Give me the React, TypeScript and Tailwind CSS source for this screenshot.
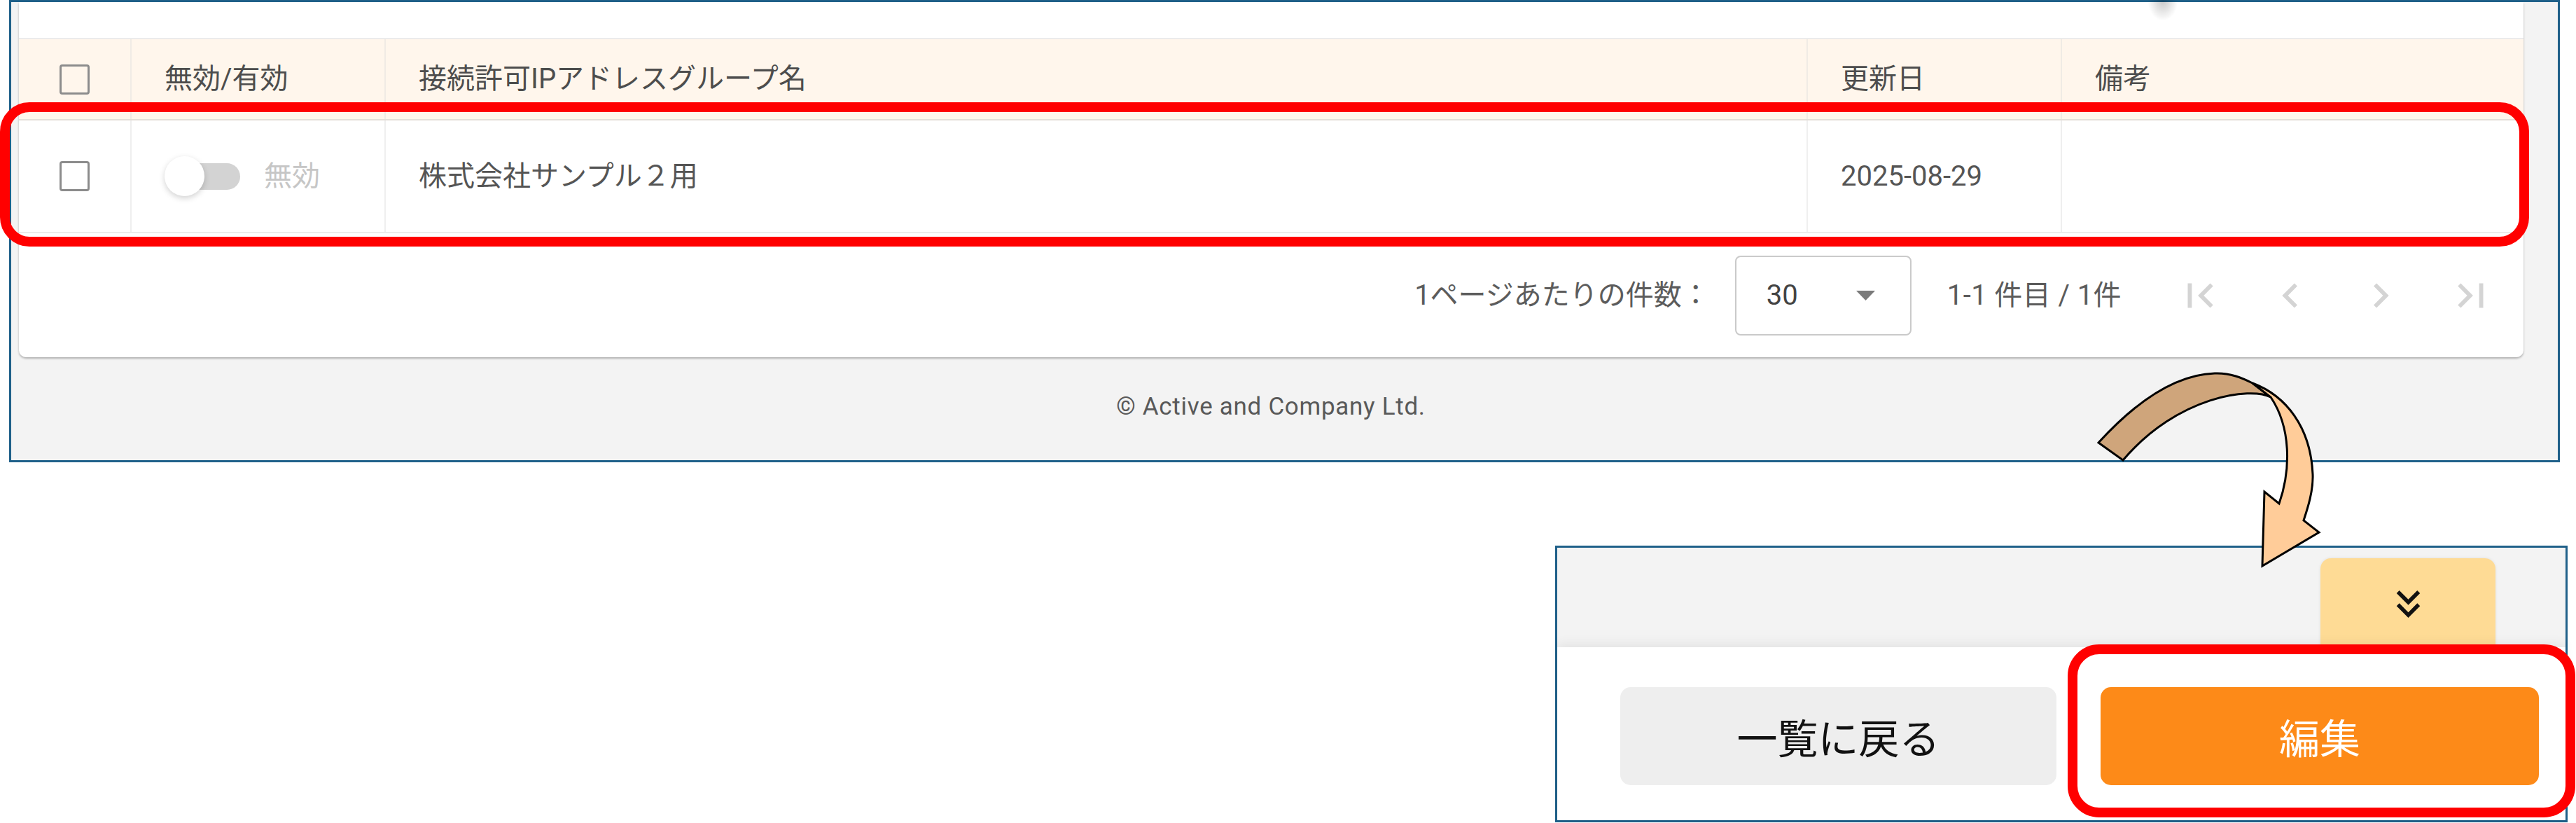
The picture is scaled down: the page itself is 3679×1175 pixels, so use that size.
import React from 'react';

const COLS = 'grid grid-cols-[161px_363px_2031px_363px_1fr]';

const FIRST_PAGE = 'M18.41 16.59 13.82 12l4.59-4.59L17 6l-6 6 6 6zM6 6h2v12H6z';
const PREV_PAGE = 'M15.41 7.41 14 6l-6 6 6 6 1.41-1.41L10.83 12z';
const NEXT_PAGE = 'M10 6 8.59 7.41 13.17 12l-4.58 4.59L10 18l6-6z';
const LAST_PAGE = 'M5.59 7.41 10.18 12l-4.59 4.59L7 18l6-6-6-6zM16 6h2v12h-2z';

function Checkbox() {
  return <div className="h-[43px] w-[43px] rounded-[4px] border-[3px] border-[#8c8c8c]" />;
}

function PageIcon({ d }: Readonly<{ d: string }>) {
  return (
    <svg viewBox="0 0 24 24" className="h-[70px] w-[70px]" fill="#d4d4d4">
      <path d={d} />
    </svg>
  );
}

function Toggle() {
  return (
    <div className="relative h-[57px] w-[108px]">
      <div className="absolute left-[10px] top-[10px] h-[38px] w-[98px] rounded-full bg-[#d3d3d3]" />
      <div className="absolute left-0 top-0 h-[57px] w-[57px] rounded-full bg-white shadow-[0_3px_8px_rgba(0,0,0,0.18)]" />
    </div>
  );
}

function ListCard() {
  return (
    <div className="ml-[11px] w-[3577px] rounded-b-[10px] bg-white shadow-[0_2px_3px_rgba(0,0,0,0.28)]">
      {/* toolbar area, mostly cut off in the capture */}
      <div className="relative h-[51px]">
        <div className="absolute left-[3040px] top-[-3px] h-[30px] w-[44px] bg-[radial-gradient(ellipse_at_top,rgba(0,0,0,0.22),transparent_70%)]" />
      </div>

      <div className={`${COLS} h-[118px] border-y-2 border-t-[#ebebeb] border-b-[#e4ded8] bg-[#fff6ec] text-[40px] text-[#4d4d4d]`}>
        <div className="flex items-center justify-center border-r-2 border-[#f0ebe5]">
          <Checkbox />
        </div>
        <div className="flex items-center border-r-2 border-[#f0ebe5] px-[47px]">無効/有効</div>
        <div className="flex items-center border-r-2 border-[#f0ebe5] px-[47px]">接続許可IPアドレスグループ名</div>
        <div className="flex items-center border-r-2 border-[#f0ebe5] px-[47px]">更新日</div>
        <div className="flex items-center px-[47px]">備考</div>
      </div>

      <div className={`${COLS} h-[161px] border-b-2 border-[#ebebeb] text-[40px] text-[#555555]`}>
        <div className="flex items-center justify-center border-r-2 border-[#efefef]">
          <Checkbox />
        </div>
        <div className="flex items-center border-r-2 border-[#efefef] pl-[47px]">
          <Toggle />
          <span className="ml-[34px] text-[#c6c6c6]">無効</span>
        </div>
        <div className="flex items-center border-r-2 border-[#efefef] px-[47px]">株式会社サンプル２用</div>
        <div className="flex items-center border-r-2 border-[#efefef] px-[47px]">2025-08-29</div>
        <div className="flex items-center px-[47px]" />
      </div>

      <div className="flex h-[177px] items-center justify-end pr-[40px] text-[40px] text-[#5c5c5c]">
        <span>1ページあたりの件数：</span>
        <div className="ml-[36px] flex h-[114px] w-[252px] items-center justify-between rounded-[8px] border-2 border-[#cacaca] pl-[43px] pr-[50px] text-[#444444]">
          <span>30</span>
          <svg viewBox="0 0 27 14" className="h-[14px] w-[27px]">
            <polygon points="0,0 27,0 13.5,14" fill="#7a7a7a" />
          </svg>
        </div>
        <span className="ml-[51px] tracking-[0.01em]">1-1 件目 / 1件</span>
        <div className="ml-[77px] flex gap-[59px]">
          <PageIcon d={FIRST_PAGE} />
          <PageIcon d={PREV_PAGE} />
          <PageIcon d={NEXT_PAGE} />
          <PageIcon d={LAST_PAGE} />
        </div>
      </div>
    </div>
  );
}

function ActionPanel() {
  return (
    <div className="ml-[2221px] mt-[119px] flex h-[395px] w-[1446px] flex-col border-[3px] border-[#1f6089]">
      <div className="flex h-[142px] justify-end bg-[#f3f3f3] pr-[100px] pt-[15px]">
        <div className="flex h-[127px] w-[250px] items-center justify-center rounded-t-[15px] bg-[#fedb95] pt-[4px] shadow-[0_0_4px_rgba(0,0,0,0.08)]">
          <svg viewBox="0 0 24 24" className="h-[67px] w-[67px]" fill="#111111">
            <path d="M18 6.41 16.59 5 12 9.58 7.41 5 6 6.41l6 6z" />
            <path d="m18 13-1.41-1.41L12 16.17l-4.59-4.58L6 13l6 6z" />
          </svg>
        </div>
      </div>
      <div className="flex flex-1 items-start gap-[63px] bg-white pl-[90px] pt-[57px] shadow-[0_-6px_14px_rgba(0,0,0,0.06)] font-['Noto_Sans_CJK_JP',sans-serif] text-[58px]">
        <button type="button" className="flex h-[140px] w-[623px] items-center justify-center rounded-[15px] bg-[#eeeeee] text-[#111111]">
          一覧に戻る
        </button>
        <button type="button" className="flex h-[140px] w-[626px] items-center justify-center rounded-[15px] bg-[#fd8a18] text-white">
          編集
        </button>
      </div>
    </div>
  );
}

export default function App() {
  return (
    <div className="relative h-[1175px] w-[3679px] overflow-hidden bg-white font-['Roboto','Noto_Sans_CJK_JP',sans-serif]">
      <div className="ml-[13px] flex h-[660px] w-[3643px] flex-col border-[3px] border-[#1f6089] bg-[#f3f3f3]">
        <ListCard />
        <div className="flex flex-1 items-center justify-center pb-[4px] pr-[39px] text-[35px] tracking-[0.02em] text-[#595959]">
          © Active and Company Ltd.
        </div>
      </div>

      <ActionPanel />

      {/* annotation overlays */}
      <div className="pointer-events-none absolute left-0 top-[146px] h-[206px] w-[3612px] rounded-[42px] border-[14px] border-[#ff0000]" />
      <div className="pointer-events-none absolute left-[2953px] top-[920px] h-[247px] w-[725px] rounded-[45px] border-[14px] border-[#ff0000]" />
      <svg className="pointer-events-none absolute left-0 top-0" width="3679" height="1175" viewBox="0 0 3679 1175">
        <path
          d="M2997 632 C3040 585 3100 535 3163 533 C3185 532 3203 540 3217 547 L3243 567 C3215 552 3110 565 3032 657 Z"
          fill="#cfa57b"
          stroke="#000"
          strokeWidth="3"
          strokeLinejoin="miter"
        />
        <path
          d="M3217 547 C3265 565 3300 610 3303 677 C3304 700 3296 725 3290 743 L3312 760 L3231 808 L3234 702 L3255 719 C3272 670 3272 610 3243 567 Z"
          fill="#ffcc99"
          stroke="#000"
          strokeWidth="3"
          strokeLinejoin="miter"
        />
      </svg>
    </div>
  );
}
